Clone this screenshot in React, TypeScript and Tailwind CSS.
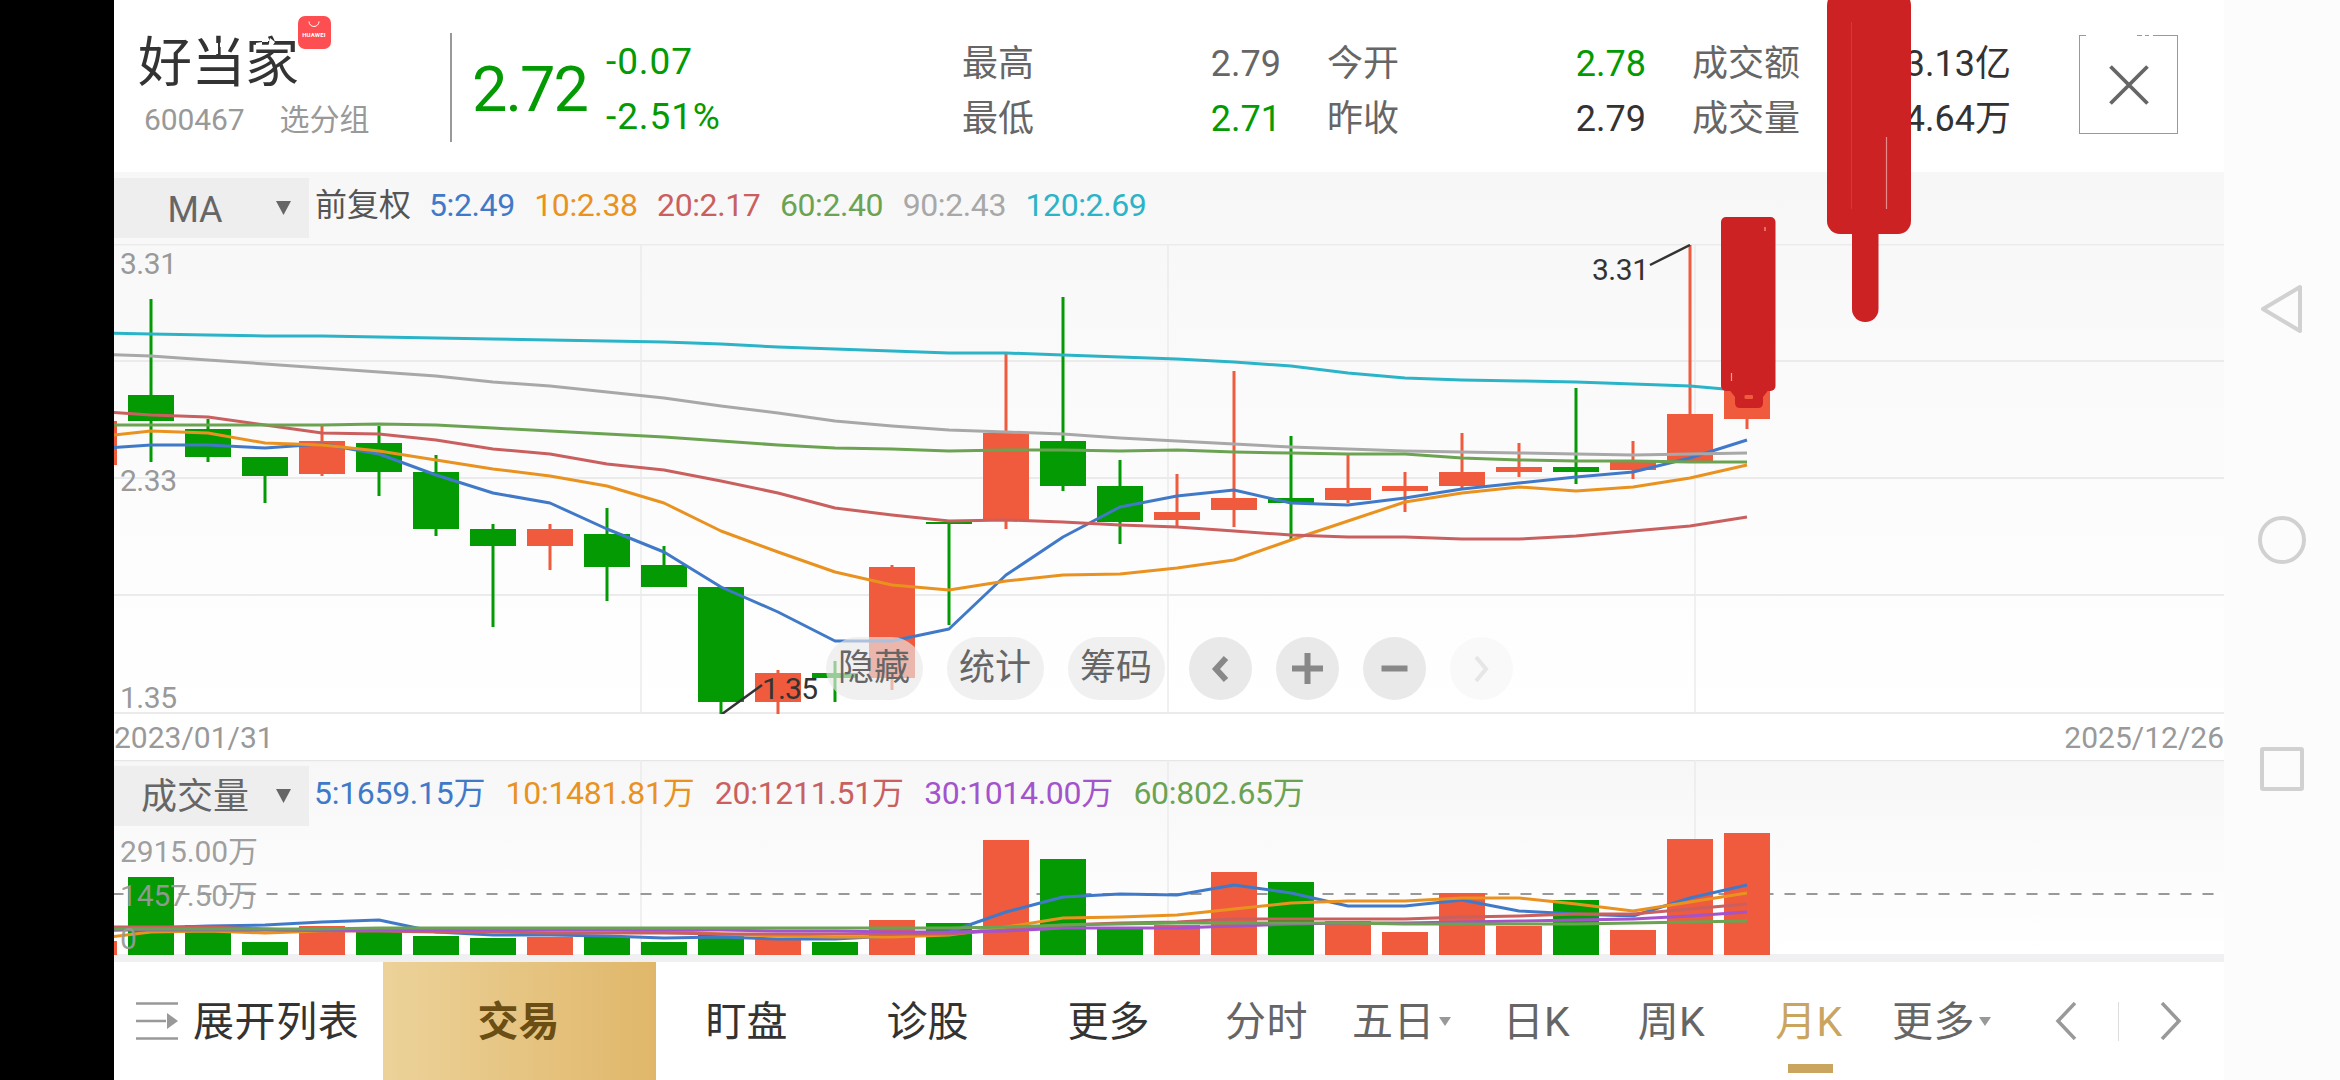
import React from 'react';
import clsx from 'clsx';

type Dir = 'up' | 'down';

interface Candle {
  dir: Dir;
  high: number;
  low: number;
  top: number;
  bottom: number;
  vol: number;
}

const UP = '#ef5b3c';
const DOWN = '#039a03';

const BLUE = '#4179c9';
const ORANGE = '#e9921f';
const RED = '#c9605f';
const GREEN = '#6ba352';
const GRAY = '#a8a8a8';
const CYAN = '#2bb4c8';
const PURPLE = '#a353cc';

const STEP = 57;
const FIRST_X = 151;
const BAR_WIDTH = 46;

const c = (dir: Dir, high: number, low: number, top: number, bottom: number, vol: number): Candle => ({
  dir,
  high,
  low,
  top,
  bottom,
  vol,
});

// the first candle is cut off by the left edge
const candles: Candle[] = [
  c('up', 421, 465, 421, 465, 941),
  c('down', 299, 462, 395, 421, 877),
  c('down', 419, 462, 429, 457, 925),
  c('down', 457, 503, 457, 476, 942),
  c('up', 426, 476, 441, 474, 926),
  c('down', 426, 496, 443, 472, 932),
  c('down', 455, 536, 472, 529, 936),
  c('down', 524, 627, 529, 546, 938),
  c('up', 524, 570, 529, 546, 937),
  c('down', 508, 601, 534, 567, 936),
  c('down', 546, 587, 565, 587, 942),
  c('down', 587, 714, 587, 702, 935),
  c('up', 670, 714, 673, 702, 938),
  c('down', 661, 702, 673, 678, 942),
  c('up', 565, 690, 567, 678, 920),
  c('down', 522, 625, 522, 524, 923),
  c('up', 354, 529, 433, 521, 840),
  c('down', 297, 491, 441, 486, 859),
  c('down', 460, 544, 486, 522, 929),
  c('up', 474, 526, 512, 520, 925),
  c('up', 371, 527, 498, 510, 872),
  c('down', 436, 539, 498, 503, 882),
  c('up', 455, 503, 488, 500, 921),
  c('up', 472, 512, 486, 491, 932),
  c('up', 433, 490, 472, 486, 893),
  c('up', 443, 477, 467, 472, 926),
  c('down', 388, 484, 467, 472, 900),
  c('up', 441, 479, 462, 470, 930),
  c('up', 245, 461, 414, 461, 839),
  c('up', 390, 429, 390, 419, 833),
];

const priceLines = [
  {
    color: BLUE,
    ys: [449, 445, 445, 448, 444, 454, 475, 493, 503, 529, 552, 587, 612, 641, 641, 629, 575, 537, 507, 496, 490, 503, 505, 498, 489, 483, 477, 472, 458, 440],
  },
  {
    color: ORANGE,
    ys: [437, 431, 433, 443, 445, 451, 460, 469, 476, 486, 503, 531, 552, 572, 585, 590, 581, 575, 574, 568, 560, 540, 521, 502, 493, 487, 491, 487, 478, 465],
  },
  {
    color: RED,
    ys: [411, 415, 417, 425, 433, 434, 440, 449, 454, 464, 470, 481, 493, 508, 515, 521, 520, 522, 525, 527, 531, 535, 537, 537, 539, 539, 536, 531, 526, 517],
  },
  {
    color: GRAY,
    ys: [354, 356, 360, 364, 368, 372, 376, 382, 386, 392, 398, 406, 413, 421, 426, 430, 432, 434, 438, 441, 444, 447, 449, 451, 452, 453, 454, 455, 454, 453],
  },
  {
    color: GREEN,
    ys: [425, 425, 425, 425, 425, 424, 425, 428, 431, 434, 437, 441, 445, 448, 449, 451, 450, 450, 451, 450, 452, 453, 454, 454, 458, 460, 461, 461, 462, 462],
  },
  {
    color: CYAN,
    ys: [333, 334, 335, 336, 336, 337, 338, 339, 340, 341, 342, 344, 347, 349, 351, 353, 353, 355, 357, 359, 362, 366, 373, 378, 380, 381, 382, 384, 386, 391],
  },
];

const volumeLines = [
  {
    color: BLUE,
    ys: [931, 928, 926, 925, 922, 920, 932, 935, 935, 936, 938, 937, 939, 939, 936, 932, 912, 897, 894, 895, 885, 893, 906, 906, 900, 911, 914, 916, 898, 885],
  },
  {
    color: ORANGE,
    ys: [939, 932, 931, 933, 931, 930, 930, 930, 930, 930, 931, 934, 936, 937, 937, 935, 927, 918, 917, 915, 909, 903, 901, 901, 898, 898, 904, 911, 902, 893],
  },
  {
    color: RED,
    ys: [927, 927, 927, 929, 931, 931, 932, 932, 933, 933, 933, 934, 934, 934, 934, 934, 930, 925, 923, 922, 919, 919, 919, 919, 917, 916, 914, 914, 909, 904],
  },
  {
    color: PURPLE,
    ys: [930, 930, 930, 930, 930, 930, 930, 930, 930, 930, 930, 930, 931, 931, 932, 932, 931, 928, 928, 928, 926, 924, 923, 923, 922, 921, 920, 919, 916, 912],
  },
  {
    color: GREEN,
    ys: [929, 929, 929, 929, 929, 928, 928, 928, 928, 928, 928, 928, 928, 928, 928, 928, 927, 925, 924, 923, 923, 923, 923, 924, 924, 924, 924, 923, 922, 921],
  },
];

const maLegend = [
  { text: '5:2.49', className: 'text-[#4179c9]' },
  { text: '10:2.38', className: 'text-[#e9921f]' },
  { text: '20:2.17', className: 'text-[#c9605f]' },
  { text: '60:2.40', className: 'text-[#6ba352]' },
  { text: '90:2.43', className: 'text-[#a8a8a8]' },
  { text: '120:2.69', className: 'text-[#2bb4c8]' },
];

const volLegend = [
  { text: '5:1659.15万', className: 'text-[#4179c9]' },
  { text: '10:1481.81万', className: 'text-[#e9921f]' },
  { text: '20:1211.51万', className: 'text-[#c9605f]' },
  { text: '30:1014.00万', className: 'text-[#a353cc]' },
  { text: '60:802.65万', className: 'text-[#6ba352]' },
];

const stats = [
  { label: '最高', value: '2.79', className: 'text-[#666]' },
  { label: '今开', value: '2.78', className: 'text-[#039a03]' },
  { label: '成交额', value: '3.13亿', className: 'text-[#333]' },
  { label: '最低', value: '2.71', className: 'text-[#039a03]' },
  { label: '昨收', value: '2.79', className: 'text-[#333]' },
  { label: '成交量', value: '4.64万', className: 'text-[#333]' },
];

const periods = [
  { label: '分时' },
  { label: '五日', menu: true },
  { label: '日K' },
  { label: '周K' },
  { label: '月K', active: true },
  { label: '更多', menu: true },
];

const xAt = (i: number) => FIRST_X + (i - 1) * STEP;

const toPoints = (ys: number[]) => ys.map((y, i) => `${xAt(i)},${y}`).join(' ');

function Lines({ lines }: { lines: { color: string; ys: number[] }[] }) {
  return (
    <>
      {lines.map((line) => (
        <polyline
          key={line.color}
          points={toPoints(line.ys)}
          fill="none"
          stroke={line.color}
          strokeWidth={3}
          strokeLinejoin="round"
        />
      ))}
    </>
  );
}

function Header() {
  return (
    <header className="flex h-[172px] bg-white">
      <div className="w-[336px] pt-[34px] pl-[24px]">
        <div className="flex">
          <h1 className="relative text-[54px] leading-[60px] tracking-[-0.5px] text-[#333]">
            好当家
            <svg className="absolute top-0 left-0" width="162" height="20" viewBox="138 34 162 20" fill="#fff">
              <path d="M215 43h3v11h-3zM220 43l3-2v6h-3zM262 36h6v6h-6zM256 43l6-1v5h-6zM270 38l5 4-4 6h-3z" />
            </svg>
          </h1>
          <div className="-mt-[18px] -ml-px flex h-[33px] w-[33px] flex-col items-center rounded-[7px] bg-[#fd4e51]">
            <svg className="mt-[5px]" width="12" height="7" viewBox="0 0 12 7">
              <path d="M1 0.5a5 5 0 0 0 10 0" fill="none" stroke="#fff" strokeWidth="1" />
            </svg>
            <span className="mt-[3px] text-[6px] leading-[8px] font-bold tracking-[0.2px] text-white">HUAWEI</span>
          </div>
        </div>
        <div className="mt-[7px] flex gap-[35px] pl-[6px] text-[30px] leading-[38px] text-[#999]">
          <span className="tracking-[-0.1px]">600467</span>
          <span>选分组</span>
        </div>
      </div>
      <div className="mt-[33px] h-[109px] w-[2px] bg-[#999]" />
      <div className="flex pl-[20px] text-[#039a03]">
        <span className="w-[134px] pt-[53px] text-[63px] leading-[74px] tracking-[-2px]">2.72</span>
        <div className="pt-[34px] text-[37px] leading-[55px] tracking-[0.9px]">
          <p>-0.07</p>
          <p>-2.51%</p>
        </div>
      </div>
      <div className="mt-[37px] mr-[68px] ml-auto grid grid-cols-3 content-start gap-x-[47px] text-[36px] leading-[55px] text-[#666]">
        {stats.map((s) => (
          <div key={s.label} className="-ml-px flex h-[55px] w-[319px] justify-between">
            <span>{s.label}</span>
            <span className={s.className}>{s.value}</span>
          </div>
        ))}
      </div>
      <button className="relative mt-[35px] mr-[46px] flex h-[99px] w-[99px] items-center justify-center border border-[#999]">
        <svg width="40" height="40" viewBox="0 0 40 40">
          <path d="M1.5 1.5l37 37M38.5 1.5l-37 37" stroke="#666" strokeWidth="3.8" />
        </svg>
        <span className="absolute -top-px left-[6px] h-px w-[51px] bg-white" />
        <span className="absolute -top-px left-[62px] h-px w-[3px] bg-white" />
        <span className="absolute -top-px left-[69px] h-px w-[4px] bg-white" />
      </button>
    </header>
  );
}

function Selector({ label }: { label: string }) {
  return (
    <button className="relative flex h-[60px] w-[195px] items-center bg-[#eee] text-[36px] text-[#666]">
      <span className="w-[162px] pt-[3px] text-center">{label}</span>
      <svg width="15" height="14" viewBox="0 0 15 14">
        <path d="M0 0h15L7.5 14z" fill="#666" />
      </svg>
    </button>
  );
}

function PriceChart() {
  return (
    <section className="relative h-[542px] bg-linear-to-b from-[#f7f7f7] to-white">
      <div className="flex h-[72px] items-start pt-[6px] text-[32px] leading-[54px]">
        <Selector label="MA" />
        <span className="ml-[6px] text-[#555]">前复权</span>
        <div className="ml-[18px] flex gap-[19.500px] tracking-[-0.4px]">
          {maLegend.map((m) => (
            <span key={m.text} className={m.className}>
              {m.text}
            </span>
          ))}
        </div>
      </div>
      <svg className="block" width="2110" height="470" viewBox="114 244 2110 470">
        {[244.5, 361, 478, 595, 713].map((y) => (
          <line key={y} x1="114" x2="2224" y1={y} y2={y} stroke="#ebebeb" strokeWidth="2" />
        ))}
        {[641, 1168, 1695].map((x) => (
          <line key={x} x1={x} x2={x} y1="244" y2="714" stroke="#ebebeb" strokeWidth="1.5" />
        ))}
        {candles.map((k, i) => {
          const color = k.dir === 'up' ? UP : DOWN;
          return (
            <g key={i} fill={color}>
              <rect x={xAt(i) - 1.5} y={k.high} width="3" height={k.low - k.high} />
              <rect x={xAt(i) - BAR_WIDTH / 2} y={k.top} width={BAR_WIDTH} height={k.bottom - k.top} />
            </g>
          );
        })}
        <Lines lines={priceLines} />
        <g fontSize="30" fill="#999">
          <text x="120" y="274" textLength="57">3.31</text>
          <text x="120" y="491" textLength="57">2.33</text>
          <text x="120" y="708" textLength="57">1.35</text>
        </g>
        <g fontSize="30" fill="#333" stroke="none">
          <text x="1592" y="280" textLength="57">3.31</text>
          <text x="762" y="699" textLength="56">1.35</text>
        </g>
        <path d="M1650 265L1690 245M722 714L762 685" stroke="#333" strokeWidth="2.5" />
      </svg>
      <div className="absolute top-[465px] left-[712px] flex gap-[24px] text-[36px] text-[#666]">
        {['隐藏', '统计', '筹码'].map((label) => (
          <button key={label} className="h-[63px] w-[97px] rounded-full bg-[#e8e8e8]/65 pr-px leading-[63px]">
            {label}
          </button>
        ))}
        <RoundButton>
          <path d="M37 21L27 32l10 11" />
        </RoundButton>
        <RoundButton>
          <path d="M16 31.5h31M31.5 16v31" />
        </RoundButton>
        <RoundButton>
          <path d="M18.500 31.500h26" />
        </RoundButton>
        <RoundButton faded>
          <path d="M26 20l10 12-10 12" />
        </RoundButton>
      </div>
    </section>
  );
}

function RoundButton({ faded = false, children }: { faded?: boolean; children: React.ReactNode }) {
  return (
    <button className={clsx('h-[63px] w-[63px] rounded-full', faded ? 'bg-[#f9f9f9]' : 'bg-[#e9e9e9]')}>
      <svg width="63" height="63" viewBox="0 0 63 63" fill="none" stroke={faded ? '#e6e6e6' : '#888'} strokeWidth={faded ? 4 : 6}>
        {children}
      </svg>
    </button>
  );
}

function VolumeChart() {
  return (
    <section className="relative h-[194px] bg-linear-to-b from-[#f7f7f7] to-white">
      <svg className="absolute inset-0" width="2110" height="195" viewBox="114 760 2110 195">
        <line x1="114" x2="2224" y1="760.5" y2="760.5" stroke="#e6e6e6" strokeWidth="1.5" />
        {[641, 1168, 1695].map((x) => (
          <line key={x} x1={x} x2={x} y1="760" y2="955" stroke="#ebebeb" strokeWidth="1.5" />
        ))}
        <line x1="112.500" x2="2214" y1="894" y2="894" stroke="#999" strokeWidth="2" strokeDasharray="11 11" />
        {candles.map((k, i) => (
          <rect
            key={i}
            x={xAt(i) - BAR_WIDTH / 2}
            y={k.vol}
            width={BAR_WIDTH}
            height={955 - k.vol}
            fill={k.dir === 'up' ? UP : DOWN}
          />
        ))}
        <Lines lines={volumeLines} />
        <g fontSize="30" fill="#999" fillOpacity="0.95">
          <text x="120" y="862" textLength="138">2915.00万</text>
          <text x="120" y="906" textLength="138">1457.50万</text>
          <text x="120" y="949">0</text>
        </g>
      </svg>
      <div className="relative flex items-start pt-[6px] text-[32px] leading-[55px]">
        <Selector label="成交量" />
        <div className="ml-[5px] flex gap-[20.500px] tracking-[-0.3px]">
          {volLegend.map((m) => (
            <span key={m.text} className={m.className}>
              {m.text}
            </span>
          ))}
        </div>
      </div>
    </section>
  );
}

function Toolbar() {
  return (
    <footer className="flex h-[118px] items-stretch bg-white text-[41px] leading-[114px] text-[#333]">
      <button className="flex w-[269px] items-center pl-[22px]">
        <svg width="42" height="38" viewBox="0 0 42 38">
          <path d="M0 1.500h42M0 19h30M0 36.500h42" stroke="#999" strokeWidth="2.6" />
          <path d="M31 11l11 8-11 8z" fill="#999" />
        </svg>
        <span className="ml-[15px] pt-[2px] tracking-[0.6px]">展开列表</span>
      </button>
      <button className="w-[273px] bg-linear-to-r from-[#ecd299] to-[#e0b76a] pt-px pr-[2px] font-bold text-[#6b4e14]">交易</button>
      {['盯盘', '诊股', '更多'].map((label) => (
        <button key={label} className="w-[181px] pt-px">
          {label}
        </button>
      ))}
      {periods.map((p) => (
        <button
          key={p.label}
          className={clsx(
            'relative flex w-[135px] items-start justify-center pt-[3px] tracking-[0.5px]',
            p.active ? 'pl-[5px] text-[#c9a560]' : 'text-[#666]'
          )}
        >
          {p.label}
          {p.menu && (
            <svg className="mt-[52px] ml-[4px]" width="12" height="9" viewBox="0 0 12 9">
              <path d="M0 0h12L6 9z" fill="#999" />
            </svg>
          )}
          {p.active && <span className="absolute bottom-[7px] left-[49px] h-[9px] w-[45px] bg-[#c9a560]" />}
        </button>
      ))}
      <div className="ml-auto flex items-center pr-[42px]">
        <svg width="22" height="38" viewBox="0 0 22 38">
          <path d="M20 1L3 19l17 18" fill="none" stroke="#999" strokeWidth="3.500" />
        </svg>
        <div className="mx-[41px] h-[39px] w-px bg-[#ddd]" />
        <svg width="22" height="38" viewBox="0 0 22 38">
          <path d="M2 1l17 18L2 37" fill="none" stroke="#999" strokeWidth="3.500" />
        </svg>
      </div>
    </footer>
  );
}

function SystemNav() {
  return (
    <nav className="h-[1080px] w-[116px] bg-[#fcfcfc]">
      <svg width="116" height="1080" viewBox="0 0 116 1080" fill="none" stroke="#d1d1d1" strokeWidth="4" strokeLinejoin="round">
        <path d="M76 287v44L39 309z" />
        <circle cx="58" cy="540" r="22" />
        <rect x="38" y="749" width="40" height="40" rx="1" />
      </svg>
    </nav>
  );
}

// freehand marks painted over the chart
function Scribbles() {
  return (
    <svg className="pointer-events-none absolute top-0 left-[1700px]" width="230" height="420" viewBox="1700 0 230 420" fill="#cc2223">
      <rect x="1827" y="-8" width="84" height="242" rx="13" />
      <rect x="1852" y="220" width="26.500" height="102" rx="13" />
      <rect x="1721" y="217" width="54.500" height="174" rx="5" />
      <path d="M1728 388h42l-7 9v6q0 5-5 5h-18q-5 0-5-5v-6z" />
      <rect x="1744.500" y="395" width="8.500" height="4" rx="1" fill={UP} />
      <path d="M1886.500 137v72" stroke="#e98a8a" strokeWidth="1.200" />
      <path d="M1851.500 22v187" stroke="#d33a3a" strokeWidth="1" />
      <path d="M1765 227v4M1731.500 373v8" stroke="#f0a0a0" strokeWidth="1.200" />
    </svg>
  );
}

export default function App() {
  return (
    <div className="relative flex h-[1080px] w-[2340px] overflow-hidden bg-white font-['Roboto','Noto_Sans_CJK_SC',sans-serif]">
      <div className="w-[114px] bg-black" />
      <main className="flex w-[2110px] flex-col overflow-hidden">
        <Header />
        <PriceChart />
        <div className="flex h-[46px] justify-between text-[30px] leading-[48px] text-[#999]">
          <span>2023/01/31</span>
          <span>2025/12/26</span>
        </div>
        <VolumeChart />
        <div className="h-[8px] bg-[#f0f0f2]" />
        <Toolbar />
      </main>
      <SystemNav />
      <Scribbles />
    </div>
  );
}
